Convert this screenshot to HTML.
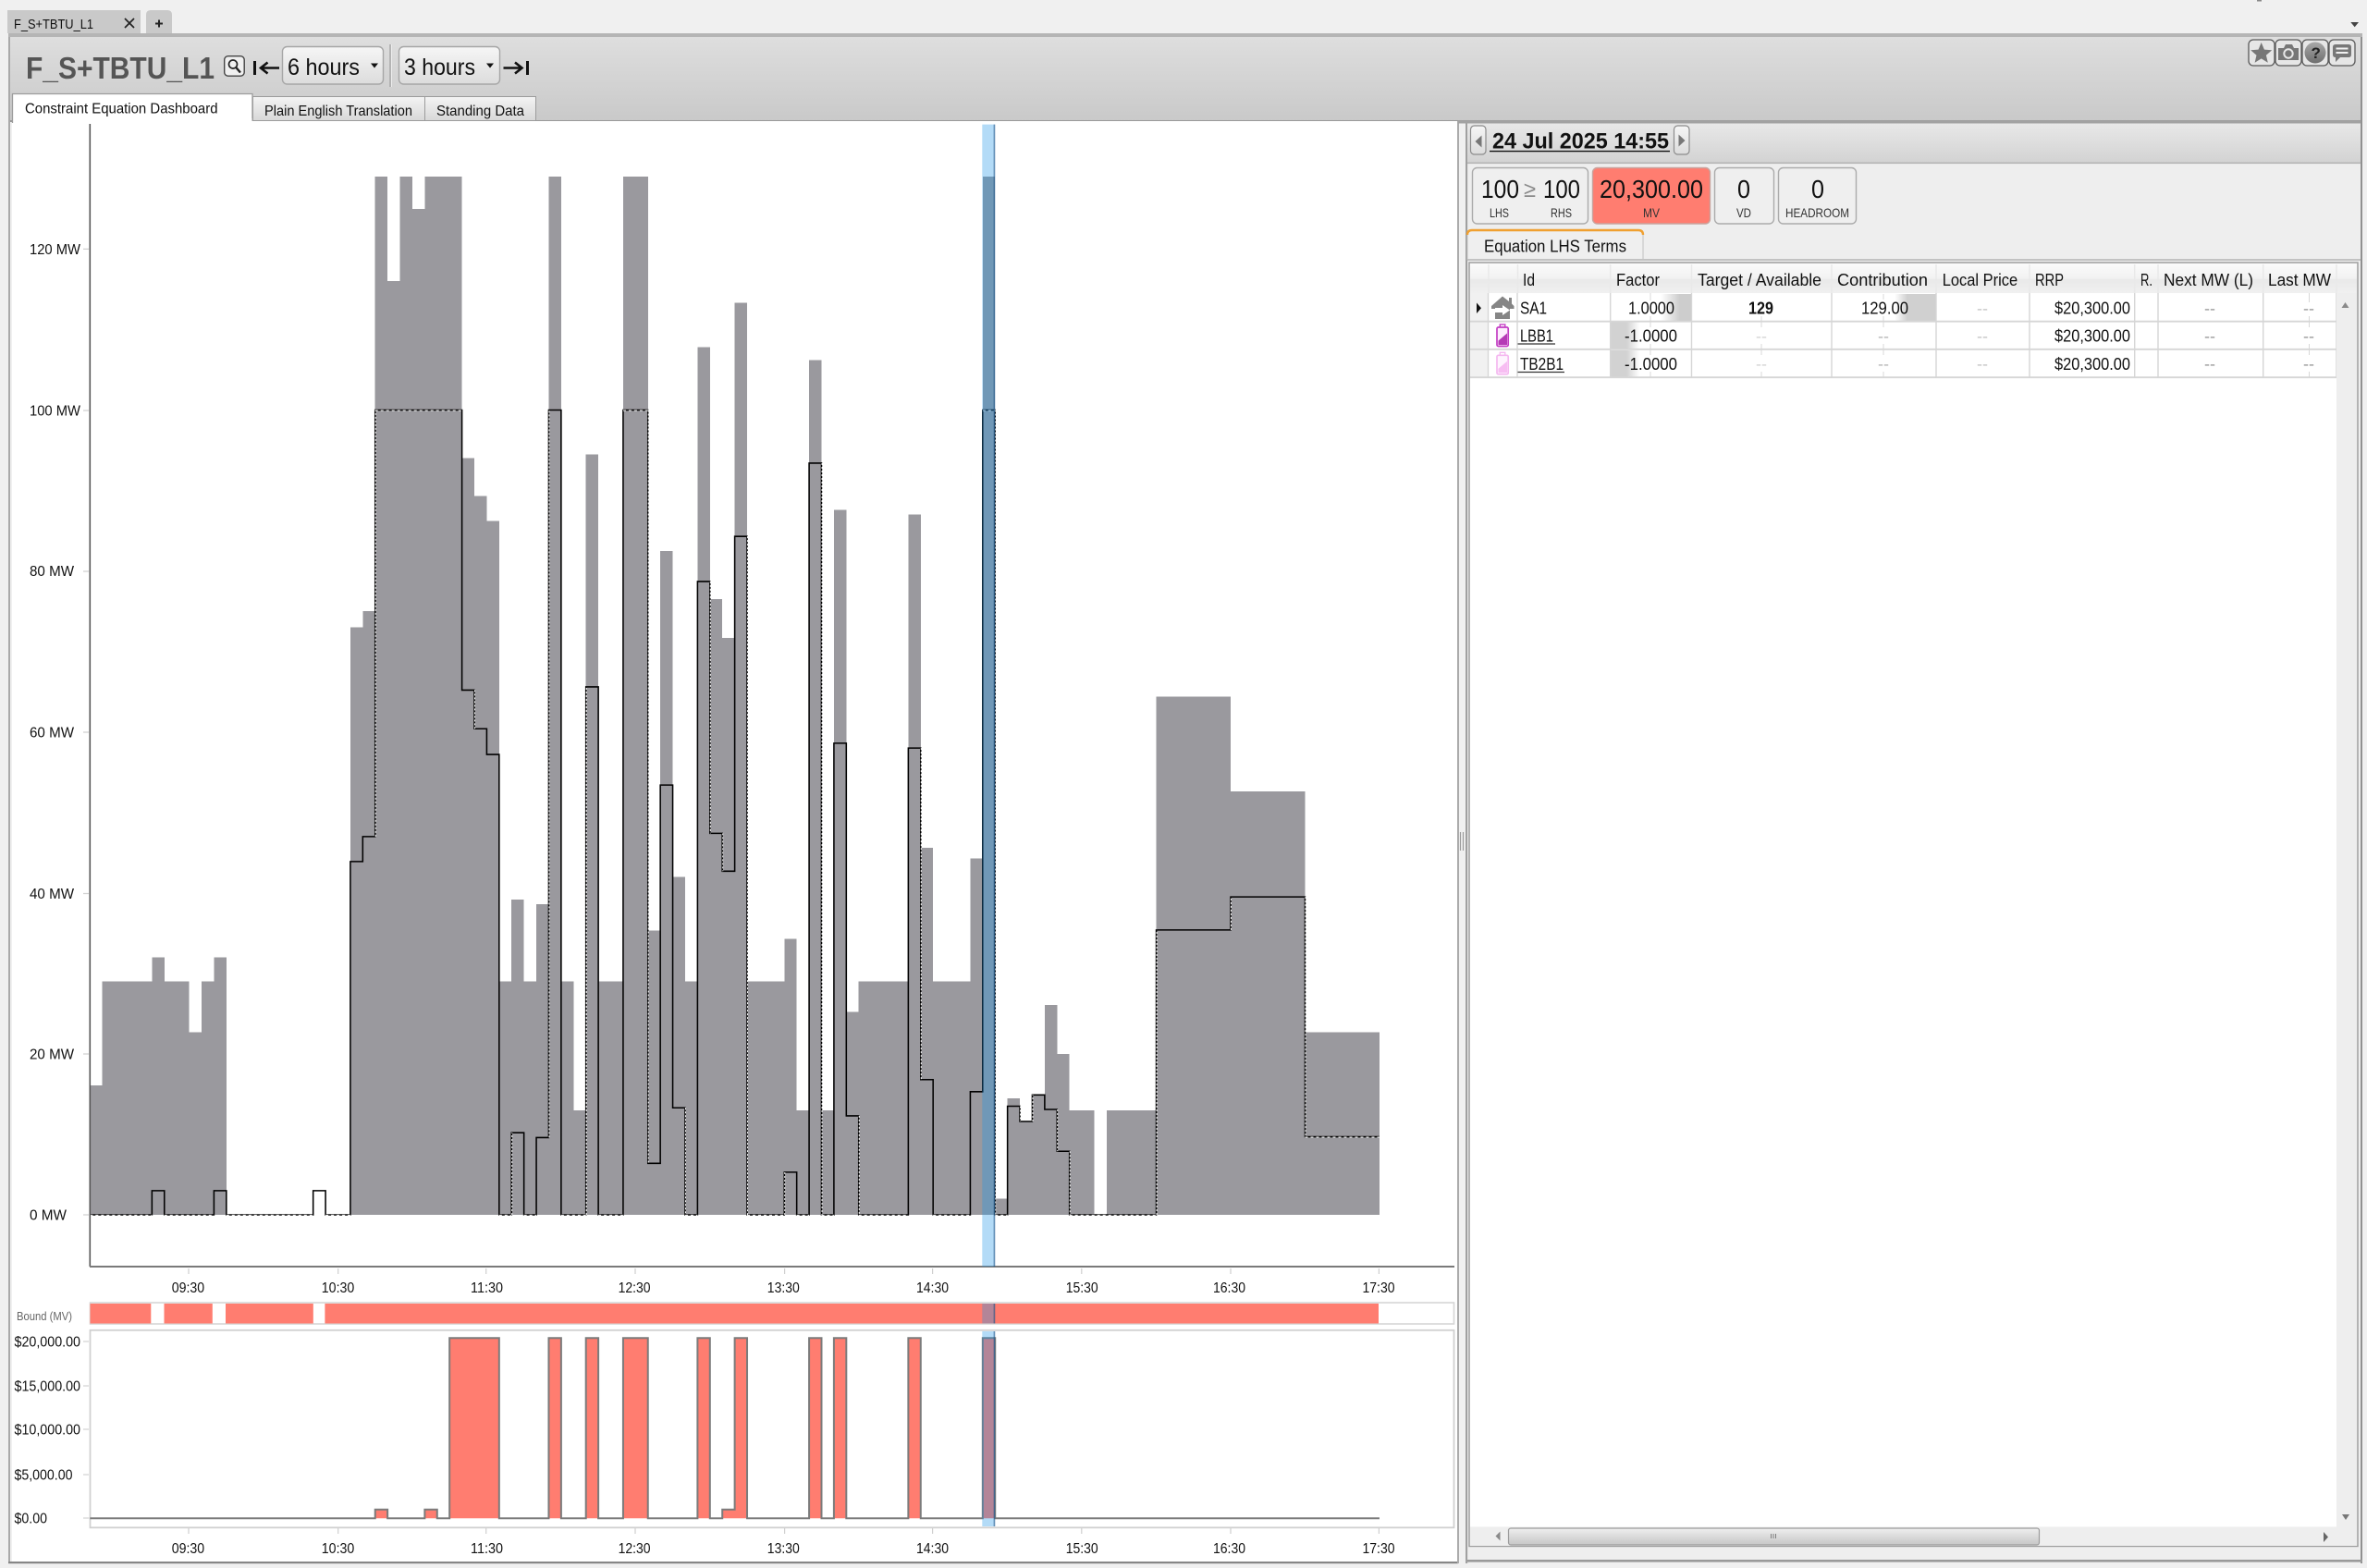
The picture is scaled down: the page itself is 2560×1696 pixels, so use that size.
<!DOCTYPE html>
<html lang="en">
<head>
<meta charset="utf-8">
<title>F_S+TBTU_L1</title>
<style>
html,body{margin:0;padding:0;background:#f0f0f0;width:2560px;height:1696px;overflow:hidden}
svg{display:block}
text{fill:#111}
.ax{font-size:15.5px}
.g{vector-effect:non-scaling-stroke}
</style>
</head>
<body>
<svg xmlns="http://www.w3.org/2000/svg" width="2560" height="1696" viewBox="0 0 2560 1696" font-family="'Liberation Sans', sans-serif">
<defs>
<linearGradient id="hdr" x1="0" y1="0" x2="0" y2="1"><stop offset="0" stop-color="#dedede"/><stop offset="1" stop-color="#c9c9c9"/></linearGradient>
<linearGradient id="date" x1="0" y1="0" x2="0" y2="1"><stop offset="0" stop-color="#e8e8e8"/><stop offset="1" stop-color="#d3d3d3"/></linearGradient>
<linearGradient id="btn" x1="0" y1="0" x2="0" y2="1"><stop offset="0" stop-color="#f6f6f6"/><stop offset="1" stop-color="#dcdcdc"/></linearGradient>
<linearGradient id="tab" x1="0" y1="0" x2="0" y2="1"><stop offset="0" stop-color="#f4f4f4"/><stop offset="1" stop-color="#d8d8d8"/></linearGradient>
<linearGradient id="th" x1="0" y1="0" x2="0" y2="1"><stop offset="0" stop-color="#fbfbfb"/><stop offset=".5" stop-color="#f2f2f2"/><stop offset=".55" stop-color="#e9e9e9"/><stop offset="1" stop-color="#f0f0f0"/></linearGradient>
<linearGradient id="thumb" x1="0" y1="0" x2="0" y2="1"><stop offset="0" stop-color="#efefef"/><stop offset="1" stop-color="#c6c6c6"/></linearGradient>
<linearGradient id="fr" x1="0" y1="0" x2="1" y2="0"><stop offset="0" stop-color="#fff"/><stop offset=".62" stop-color="#fff"/><stop offset=".85" stop-color="#cdcdcd"/><stop offset="1" stop-color="#cdcdcd"/></linearGradient>
<linearGradient id="fl" x1="0" y1="0" x2="1" y2="0"><stop offset="0" stop-color="#d2d2d2"/><stop offset=".2" stop-color="#d2d2d2"/><stop offset=".36" stop-color="#fff"/><stop offset="1" stop-color="#fff"/></linearGradient>
<linearGradient id="cr" x1="0" y1="0" x2="1" y2="0"><stop offset="0" stop-color="#fff"/><stop offset=".6" stop-color="#fff"/><stop offset=".72" stop-color="#d0d0d0"/><stop offset="1" stop-color="#d0d0d0"/></linearGradient>
<linearGradient id="q" x1="0" y1="0" x2="0" y2="1"><stop offset="0" stop-color="#a8a8a8"/><stop offset="1" stop-color="#6e6e6e"/></linearGradient>
</defs>

<!-- page background -->
<rect width="2560" height="1696" fill="#f0f0f0"/>
<path d="M2542.3 24h8.7l-4.3 5.3z" fill="#444"/>
<rect x="2441" y="0" width="5" height="1.5" fill="#888"/>

<!-- window tabs -->
<rect x="8" y="11" width="144" height="25" fill="#c9c9c9"/>
<text x="15" y="31" font-size="15" textLength="86" lengthAdjust="spacingAndGlyphs">F_S+TBTU_L1</text>
<path d="M135 20L145 30M145 20L135 30" stroke="#222" stroke-width="1.7" fill="none"/>
<path d="M158 36V16q0-5 5-5h18q5 0 5 5v20z" fill="#c9c9c9"/>
<path d="M168 25.5h8M172 21.5v8" stroke="#222" stroke-width="2" fill="none"/>

<!-- main window frame -->
<rect x="9" y="36" width="2546" height="4" fill="#b5b5b5"/>
<rect x="9" y="40" width="2545" height="91" fill="url(#hdr)"/>
<rect x="9" y="130" width="2545" height="2" fill="#999"/>
<rect x="9" y="40" width="2" height="1651" fill="#a9a9a9"/>
<rect x="2553" y="40" width="2" height="1651" fill="#909090"/>

<!-- title row -->
<text x="28" y="85" font-size="33" font-weight="bold" textLength="204" lengthAdjust="spacingAndGlyphs" style="fill:#555">F_S+TBTU_L1</text>
<rect x="242.7" y="60.7" width="21.5" height="21.5" rx="4" fill="#f0f0f0" stroke="#444" stroke-width="1.4"/>
<circle cx="252" cy="69.5" r="4.5" fill="none" stroke="#222" stroke-width="1.7"/>
<path d="M255.3 73L260 78.5" stroke="#222" stroke-width="2.4"/>
<path d="M275.5 66V81" stroke="#111" stroke-width="3"/>
<path d="M302 73.5H284M289.5 67.5L282 73.5L289.5 79.5" stroke="#111" stroke-width="2.6" fill="none"/>
<rect x="305.5" y="50.5" width="109" height="40.5" rx="5" fill="url(#btn)" stroke="#a6a6a6" stroke-width="1.4"/>
<text x="311" y="81" font-size="25" textLength="78" lengthAdjust="spacingAndGlyphs">6 hours</text>
<path d="M401 68.5h8l-4 5z" fill="#111"/>
<path d="M422 48V94" stroke="#a8a8a8" stroke-width="1.5"/>
<path d="M423.5 48V94" stroke="#ececec" stroke-width="1"/>
<rect x="431.5" y="50.5" width="109" height="40.5" rx="5" fill="url(#btn)" stroke="#a6a6a6" stroke-width="1.4"/>
<text x="437" y="81" font-size="25" textLength="77" lengthAdjust="spacingAndGlyphs">3 hours</text>
<path d="M526 68.5h8l-4 5z" fill="#111"/>
<path d="M544.5 73.5H563M557 67.5L564.5 73.5L557 79.5" stroke="#111" stroke-width="2.6" fill="none"/>
<path d="M570.5 66V81" stroke="#111" stroke-width="3"/>

<!-- top right buttons -->
<rect x="2432" y="43" width="28" height="28" rx="5" fill="#e6e6e6" stroke="#5a5a5a" stroke-width="1.3"/>
<rect x="2461" y="43" width="28" height="28" rx="5" fill="#e6e6e6" stroke="#5a5a5a" stroke-width="1.3"/>
<rect x="2490" y="43" width="28" height="28" rx="5" fill="#e6e6e6" stroke="#5a5a5a" stroke-width="1.3"/>
<rect x="2519" y="43" width="28" height="28" rx="5" fill="#e6e6e6" stroke="#5a5a5a" stroke-width="1.3"/>
<path d="M2445.7 46l3.2 7.6 8.3.7-6.3 5.4 1.9 8-7.1-4.3-7.1 4.3 1.9-8-6.3-5.4 8.3-.7z" fill="#777"/>
<path d="M2464 52h6l2-4h7l2 4h5v13h-22z" fill="#777"/>
<circle cx="2475" cy="58" r="4.7" fill="#777" stroke="#e8e8e8" stroke-width="2"/>
<circle cx="2504" cy="57" r="11.5" fill="url(#q)"/>
<text x="2499.5" y="63" font-size="17" font-weight="bold" style="fill:#222">?</text>
<path d="M2526 48h14q3 0 3 3v8q0 3-3 3h-9l-5 5v-5q-3 0-3-3v-8q0-3 3-3z" fill="#777"/>
<path d="M2526.5 52.5h13M2526.5 57h13" stroke="#f0f0f0" stroke-width="2"/>

<!-- chart area tabs -->
<rect x="13" y="131" width="1564" height="1558" fill="#fff"/>
<rect x="273.5" y="104.5" width="186" height="26" fill="url(#tab)" stroke="#9c9c9c" stroke-width="1"/>
<rect x="459.5" y="104.5" width="120" height="26" fill="url(#tab)" stroke="#9c9c9c" stroke-width="1"/>
<path d="M13.5 133V101.5H273V131" fill="#fff" stroke="#9c9c9c" stroke-width="1.3"/>
<rect x="14.5" y="128" width="258" height="6" fill="#fff"/>
<text x="27" y="122.5" font-size="16" textLength="208.5" lengthAdjust="spacingAndGlyphs">Constraint Equation Dashboard</text>
<text x="286" y="125" font-size="16" textLength="160" lengthAdjust="spacingAndGlyphs">Plain English Translation</text>
<text x="472" y="125" font-size="16" textLength="95" lengthAdjust="spacingAndGlyphs">Standing Data</text>

<!-- MAIN CHART -->
<g shape-rendering="crispEdges">
<path transform="translate(97.3,1314) scale(13.41,-8.705)" fill="#9a999e" d="M0 0V16.1H1V29H5V32H6V29H8V22.7H9V29H10V32H11V0H21V73H22V75H23V129H24V116H25V129H26V125H27V129H30V94H31V89.3H32V86.2H33V29H34V39.2H35V29H36V38.6H37V129H38V29H39V13H40V94.5H41V29H43V129H45V35.3H46V82.5H47V42H48V29H49V107.8H50V76.5H51V71.7H52V113.3H53V29H56V34.3H57V13H58V106.2H59V13H60V87.6H61V25.2H62V29H66V87H67V45.6H68V29H71V44.3H72V129H73V2H74V14.5H75V11.6H76V14.9H77V26.1H78V20H79V13H81V0H82V13H86V64.4H92V52.6H98V22.7H104V0Z"/>
</g>
<path class="g" transform="translate(97.3,1314) scale(13.41,-8.705)" fill="none" stroke="#000" stroke-width="1.55" d="M0 0H5V3H6V0H10V3H11V0H18V3H19V0H21V43.9H22V47H23V100H30V65.2H31V60.4H32V57.2H33V0H34V10.2H35V0H36V9.6H37V100H38V0H40V65.6H41V0H43V100H45V6.4H46V53.4H47V13.3H48V0H49V78.7H50V47.4H51V42.7H52V84.3H53V0H56V5.3H57V0H58V93.4H59V0H60V58.6H61V12.3H62V0H66V58H67V16.8H68V0H71V15.3H72V100H73V0H74V13.5H75V11.6H76V14.9H77V13.1H78V7.9H79V0H86V35.4H92V39.5H98V9.7H104"/>
<path class="g" transform="translate(97.8,1314) scale(13.41,-8.705)" fill="none" stroke="#fff" stroke-width="1" stroke-dasharray="2 2" d="M23 47V100M31 65.2V60.4M34 0V10.2M37 9.6V100M40 0V65.6M45 100V6.4M48 13.3V0M50 78.7V47.4M51 47.4V42.7M53 84.3V0M56 0V5.3M59 93.4V0M62 12.3V0M67 58V16.8M73 100V0M75 13.5V11.6M76 11.6V14.9M78 13.1V7.9M79 7.9V0M86 0V35.4M92 35.4V39.5M98 39.5V9.7"/>
<path class="g" transform="translate(97.3,1314.4) scale(13.41,-8.705)" fill="none" stroke="#fff" stroke-width="1" stroke-dasharray="3 3" d="M0 0H5M6 0H10M11 0H18M19 0H21M33 0H34M35 0H36M38 0H40M41 0H43M48 0H49M53 0H56M57 0H58M59 0H60M62 0H66M68 0H71M73 0H74M79 0H86"/>
<path class="g" transform="translate(97.3,1314.5) scale(13.41,-8.705)" fill="none" stroke="#fff" stroke-width="1" stroke-dasharray="3 3" d="M23 100H30M43 100H45M72 100H73M98 9.7H104"/>

<!-- main axes -->
<path d="M97.3 134V1370" stroke="#555" stroke-width="1.6"/>
<path d="M97 1370H1573" stroke="#7a7a7a" stroke-width="2"/>
<path d="M90 269.4h6M90 444h6M90 618h6M90 792h6M90 966.5h6M90 1140h6M90 1314h6" stroke="#d0d0d0" stroke-width="1.2"/>
<text class="ax" x="32" y="274.9" textLength="55" lengthAdjust="spacingAndGlyphs">120 MW</text>
<text class="ax" x="32" y="449.5" textLength="55" lengthAdjust="spacingAndGlyphs">100 MW</text>
<text class="ax" x="32" y="623" textLength="48" lengthAdjust="spacingAndGlyphs">80 MW</text>
<text class="ax" x="32" y="797.5" textLength="48" lengthAdjust="spacingAndGlyphs">60 MW</text>
<text class="ax" x="32" y="972" textLength="48" lengthAdjust="spacingAndGlyphs">40 MW</text>
<text class="ax" x="32" y="1145.5" textLength="48" lengthAdjust="spacingAndGlyphs">20 MW</text>
<text class="ax" x="32" y="1319.5" textLength="40" lengthAdjust="spacingAndGlyphs">0 MW</text>

<!-- ticks and labels upper -->
<path d="M204 1372v6M365.7 1372v6M525.7 1372v6M687 1372v6M848.6 1372v6M1008.6 1372v6M1169.8 1372v6M1331 1372v6M1491.4 1372v6" stroke="#cfcfcf" stroke-width="1.2"/>
<g class="ax" font-size="15.5">
<text x="185.7" y="1398" textLength="35.5" lengthAdjust="spacingAndGlyphs">09:30</text>
<text x="347.8" y="1398" textLength="35.5" lengthAdjust="spacingAndGlyphs">10:30</text>
<text x="509" y="1398" textLength="35" lengthAdjust="spacingAndGlyphs">11:30</text>
<text x="668.6" y="1398" textLength="35" lengthAdjust="spacingAndGlyphs">12:30</text>
<text x="829.8" y="1398" textLength="35" lengthAdjust="spacingAndGlyphs">13:30</text>
<text x="991" y="1398" textLength="35" lengthAdjust="spacingAndGlyphs">14:30</text>
<text x="1152.7" y="1398" textLength="35" lengthAdjust="spacingAndGlyphs">15:30</text>
<text x="1312" y="1398" textLength="35" lengthAdjust="spacingAndGlyphs">16:30</text>
<text x="1473.5" y="1398" textLength="35" lengthAdjust="spacingAndGlyphs">17:30</text>
</g>

<!-- bound strip -->
<rect x="97.5" y="1409" width="1475" height="23" fill="#fff" stroke="#d6d6d6" stroke-width="1.6"/>
<path d="M97.5 1410H163.3V1431.5H97.5ZM177.5 1410H229.8V1431.5H177.5ZM244 1410H338.8V1431.5H244ZM351.4 1410H1491V1431.5H351.4Z" fill="#ff7d70"/>
<text x="18" y="1428" font-size="12.5" textLength="60" lengthAdjust="spacingAndGlyphs" style="fill:#666">Bound (MV)</text>

<!-- price chart -->
<rect x="97.5" y="1438.8" width="1475" height="213.5" fill="#fff" stroke="#d0d0d0" stroke-width="1.8"/>
<path class="g" transform="translate(97.3,1642.3) scale(13.41,-0.009606)" fill="#ff7d70" stroke="#7b7b7b" stroke-width="2" d="M0 0H23V1000H24V0H27V1000H28V0H29V20300H33V0H37V20300H38V0H40V20300H41V0H43V20300H45V0H49V20300H50V0H51V1000H52V20300H53V0H58V20300H59V0H60V20300H61V0H66V20300H67V0H72V20300H73V0H104"/>
<path d="M90 1451h6M90 1499h6M90 1546h6M90 1595h6M90 1642h6" stroke="#d4d4d4" stroke-width="1.2"/>
<g font-size="15.5">
<text x="15.5" y="1456.5" textLength="71.5" lengthAdjust="spacingAndGlyphs">$20,000.00</text>
<text x="15.5" y="1504.5" textLength="71.5" lengthAdjust="spacingAndGlyphs">$15,000.00</text>
<text x="15.5" y="1551.5" textLength="71.5" lengthAdjust="spacingAndGlyphs">$10,000.00</text>
<text x="15.5" y="1600.5" textLength="63" lengthAdjust="spacingAndGlyphs">$5,000.00</text>
<text x="15.5" y="1647.5" textLength="35.5" lengthAdjust="spacingAndGlyphs">$0.00</text>
</g>
<path d="M204 1653v6M365.7 1653v6M525.7 1653v6M687 1653v6M848.6 1653v6M1008.6 1653v6M1169.8 1653v6M1331 1653v6M1491.4 1653v6" stroke="#cfcfcf" stroke-width="1.2"/>
<g font-size="15.5">
<text x="185.7" y="1680" textLength="35.5" lengthAdjust="spacingAndGlyphs">09:30</text>
<text x="347.8" y="1680" textLength="35.5" lengthAdjust="spacingAndGlyphs">10:30</text>
<text x="509" y="1680" textLength="35" lengthAdjust="spacingAndGlyphs">11:30</text>
<text x="668.6" y="1680" textLength="35" lengthAdjust="spacingAndGlyphs">12:30</text>
<text x="829.8" y="1680" textLength="35" lengthAdjust="spacingAndGlyphs">13:30</text>
<text x="991" y="1680" textLength="35" lengthAdjust="spacingAndGlyphs">14:30</text>
<text x="1152.7" y="1680" textLength="35" lengthAdjust="spacingAndGlyphs">15:30</text>
<text x="1312" y="1680" textLength="35" lengthAdjust="spacingAndGlyphs">16:30</text>
<text x="1473.5" y="1680" textLength="35" lengthAdjust="spacingAndGlyphs">17:30</text>
</g>

<!-- highlighted interval -->
<g fill="rgb(32,149,232)" fill-opacity=".34">
<rect x="1062.3" y="134.6" width="13.8" height="1235.4"/>
<rect x="1062.3" y="1410" width="13.8" height="21.5"/>
<rect x="1062.3" y="1440" width="13.8" height="211"/>
</g>
<g fill="rgb(20,70,120)" fill-opacity=".5">
<rect x="1074.6" y="134.6" width="1.7" height="1235.4"/>
<rect x="1074.6" y="1410" width="1.7" height="21.5"/>
<rect x="1074.6" y="1440" width="1.7" height="211"/>
</g>

<!-- left panel bottom -->
<rect x="9" y="1689" width="1568" height="2.2" fill="#868686"/>

<!-- splitter -->
<rect x="1577" y="131" width="9" height="1560" fill="#f0f0f0"/>
<rect x="1576" y="131" width="2" height="1560" fill="#ababab"/>
<rect x="1585" y="131" width="2" height="1560" fill="#a0a0a0"/>
<rect x="1587" y="131" width="1.4" height="1560" fill="#e4e4e4"/>
<path d="M1579.5 900v20M1582.5 900v20" stroke="#9a9a9a" stroke-width="1.2"/>

<!-- right panel -->
<rect x="1588" y="131" width="965" height="1558" fill="#eeeeee"/>
<rect x="1587" y="133.5" width="966" height="42" fill="url(#date)"/>
<rect x="1577" y="130.5" width="976" height="3" fill="#a2a2a2"/>
<rect x="1587" y="175.5" width="966" height="1.6" fill="#b4b4b4"/>
<rect x="1587" y="1687" width="968" height="2.6" fill="#9a9a9a"/>

<!-- date nav -->
<rect x="1590.5" y="136" width="16.5" height="31" rx="4" fill="url(#btn)" stroke="#8c8c8c" stroke-width="1.2"/>
<path d="M1602.5 146.5v13l-7-6.5z" fill="#777"/>
<rect x="1810.5" y="136" width="16.5" height="31" rx="4" fill="url(#btn)" stroke="#8c8c8c" stroke-width="1.2"/>
<path d="M1815.5 145.5v13l7-6.5z" fill="#777"/>
<text x="1614" y="160.7" font-size="24" font-weight="bold" textLength="191" lengthAdjust="spacingAndGlyphs">24 Jul 2025 14:55</text>
<path d="M1611 163.6H1806" stroke="#111" stroke-width="1.4"/>

<!-- stat boxes -->
<rect x="1592.5" y="181.5" width="125" height="60.5" rx="5" fill="#efefef" stroke="#ababab" stroke-width="1.4"/>
<text x="1602" y="214" font-size="28" textLength="41" lengthAdjust="spacingAndGlyphs">100</text>
<text x="1648" y="213" font-size="24" textLength="13" lengthAdjust="spacingAndGlyphs" style="fill:#8a8a8a">≥</text>
<text x="1669" y="214" font-size="28" textLength="40" lengthAdjust="spacingAndGlyphs">100</text>
<text x="1611" y="235" font-size="14" textLength="21" lengthAdjust="spacingAndGlyphs" style="fill:#333">LHS</text>
<text x="1677" y="235" font-size="14" textLength="23" lengthAdjust="spacingAndGlyphs" style="fill:#333">RHS</text>
<rect x="1722.5" y="181.5" width="127" height="60.5" rx="5" fill="#ff7d70" stroke="#c9a49e" stroke-width="1.4"/>
<text x="1730" y="214" font-size="28" textLength="112" lengthAdjust="spacingAndGlyphs">20,300.00</text>
<text x="1777" y="235" font-size="14" textLength="18" lengthAdjust="spacingAndGlyphs" style="fill:#333">MV</text>
<rect x="1854.5" y="181.5" width="64" height="60.5" rx="5" fill="#efefef" stroke="#ababab" stroke-width="1.4"/>
<text x="1879" y="214" font-size="28" textLength="14" lengthAdjust="spacingAndGlyphs">0</text>
<text x="1878" y="235" font-size="14" textLength="16" lengthAdjust="spacingAndGlyphs" style="fill:#333">VD</text>
<rect x="1923.5" y="181.5" width="84" height="60.5" rx="5" fill="#efefef" stroke="#ababab" stroke-width="1.4"/>
<text x="1959" y="214" font-size="28" textLength="14" lengthAdjust="spacingAndGlyphs">0</text>
<text x="1931" y="235" font-size="14" textLength="69" lengthAdjust="spacingAndGlyphs" style="fill:#333">HEADROOM</text>

<!-- sub tab -->
<path d="M1587 281V254q0-5 5-5H1772q5 0 5 5V281z" fill="#efefef" stroke="#c0c0c0" stroke-width="1"/>
<path d="M1587 254q0-5 5-5H1772q5 0 5 5" fill="none" stroke="#f0a030" stroke-width="2.4"/>
<text x="1605" y="272.5" font-size="18" textLength="154" lengthAdjust="spacingAndGlyphs">Equation LHS Terms</text>
<rect x="1777" y="280" width="776" height="2" fill="#c2c2c2"/>
<rect x="1587" y="280" width="190" height="2" fill="#c2c2c2"/>

<!-- table -->
<rect x="1589" y="284" width="961" height="1388.5" fill="#eeeeee" stroke="#9c9c9c" stroke-width="1.4"/>
<rect x="1590" y="317" width="937" height="1334.5" fill="#fff"/>
<rect x="1590" y="285" width="959" height="32" fill="url(#th)"/>
<rect x="1590" y="317" width="19.5" height="91.5" fill="#f1f1f1"/>
<path d="M1610 286V317M1641.5 286V317M1741.7 286V317M1829.5 286V317M1981 286V317M2094 286V317M2195 286V317M2308.7 286V317M2334 286V317M2447.7 286V317M2527 286V317" stroke="#e9e9e9" stroke-width="1.5"/>
<g font-size="18">
<text x="1647" y="309" textLength="13" lengthAdjust="spacingAndGlyphs">Id</text>
<text x="1748" y="309" textLength="47" lengthAdjust="spacingAndGlyphs">Factor</text>
<text x="1836" y="309" textLength="134" lengthAdjust="spacingAndGlyphs">Target / Available</text>
<text x="1987" y="309" textLength="98" lengthAdjust="spacingAndGlyphs">Contribution</text>
<text x="2100.7" y="309" textLength="81.5" lengthAdjust="spacingAndGlyphs">Local Price</text>
<text x="2201" y="309" textLength="31" lengthAdjust="spacingAndGlyphs">RRP</text>
<text x="2315" y="309" textLength="13" lengthAdjust="spacingAndGlyphs">R.</text>
<text x="2340" y="309" textLength="97" lengthAdjust="spacingAndGlyphs">Next MW (L)</text>
<text x="2453" y="309" textLength="68" lengthAdjust="spacingAndGlyphs">Last MW</text>
</g>

<!-- cell backgrounds -->
<rect x="1741.7" y="318" width="88" height="29" fill="url(#fr)"/>
<rect x="1741.7" y="348.5" width="88" height="29" fill="url(#fl)"/>
<rect x="1741.7" y="379" width="88" height="29" fill="url(#fl)"/>
<rect x="1981.5" y="318" width="113" height="29" fill="url(#cr)"/>

<!-- faint centre marks -->
<path d="M1785 317v8M1785 342v12M1785 372v12M1785 402v6M1905 342v12M1905 372v12M1905 402v6M2037 318v6M2037 342v12M2037 372v12M2037 402v6M2497.5 317v10M2497.5 342v12M2497.5 372v12M2497.5 402v6" stroke="#d8d8d8" stroke-width="1"/>

<!-- grid -->
<path d="M1590 347.7H2527M1590 377.8H2527M1590 408.2H2527" stroke="#d6d6d6" stroke-width="1.8"/>
<path d="M1609.5 317V408M1641 317V408M1741.7 317V408M1829.5 317V408M1981 317V408M2094 317V408M2195 317V408M2308.7 317V408M2334 317V408M2447.7 317V408M2527 317V408" stroke="#d6d6d6" stroke-width="1.4"/>

<!-- row 1 -->
<path d="M1597 327.5v11.5l5-5.7z" fill="#111"/>
<path d="M1625 320.5L1632 326V322H1635V328.5L1637.5 331V334H1633V345H1617V338H1625V341L1633 335.5L1625 330V333H1617V334H1613V331Z" fill="#858585"/>
<text x="1644" y="339.5" font-size="18" textLength="29" lengthAdjust="spacingAndGlyphs">SA1</text>
<text x="1761" y="339.5" font-size="18" textLength="50" lengthAdjust="spacingAndGlyphs">1.0000</text>
<text x="1891" y="339.5" font-size="18" textLength="27" lengthAdjust="spacingAndGlyphs" font-weight="bold">129</text>
<text x="2013" y="339.5" font-size="18" textLength="51" lengthAdjust="spacingAndGlyphs">129.00</text>
<text x="2222" y="339.5" font-size="18" textLength="82" lengthAdjust="spacingAndGlyphs">$20,300.00</text>

<!-- row 2 -->
<rect x="1622.3" y="351" width="5.5" height="3" fill="none" stroke="#c43ec4" stroke-width="1.4"/>
<rect x="1619" y="354" width="12.2" height="20.5" rx="1.5" fill="#fdeefd" stroke="#c43ec4" stroke-width="1.7"/>
<path d="M1620.5 373V368.5L1630 360.5V373Z" fill="#b53ab5"/>
<text x="1644" y="369.5" font-size="18" textLength="36" lengthAdjust="spacingAndGlyphs">LBB1</text>
<path d="M1641.5 372H1682" stroke="#333" stroke-width="1.3"/>
<text x="1757" y="369.5" font-size="18" textLength="57" lengthAdjust="spacingAndGlyphs">-1.0000</text>
<text x="2222" y="369.5" font-size="18" textLength="82" lengthAdjust="spacingAndGlyphs">$20,300.00</text>

<!-- row 3 -->
<rect x="1622.3" y="381.3" width="5.5" height="3" fill="none" stroke="#f5b8f0" stroke-width="1.4"/>
<rect x="1619" y="384.3" width="12.2" height="20.5" rx="1.5" fill="#fef4fe" stroke="#f5b8f0" stroke-width="1.7"/>
<path d="M1620.5 403.3V398.8L1630 390.8V403.3Z" fill="#f7bdf2"/>
<text x="1644" y="400" font-size="18" textLength="47" lengthAdjust="spacingAndGlyphs">TB2B1</text>
<path d="M1641.5 402.5H1692" stroke="#333" stroke-width="1.3"/>
<text x="1757" y="400" font-size="18" textLength="57" lengthAdjust="spacingAndGlyphs">-1.0000</text>
<text x="2222" y="400" font-size="18" textLength="82" lengthAdjust="spacingAndGlyphs">$20,300.00</text>

<!-- dashes -->
<g font-size="15">
<text x="1899" y="369" textLength="12" lengthAdjust="spacingAndGlyphs" style="fill:#ccc">--</text>
<text x="1899" y="399" textLength="12" lengthAdjust="spacingAndGlyphs" style="fill:#ccc">--</text>
<text x="2031" y="369" textLength="12" lengthAdjust="spacingAndGlyphs" style="fill:#aaa">--</text>
<text x="2031" y="399" textLength="12" lengthAdjust="spacingAndGlyphs" style="fill:#aaa">--</text>
<text x="2138" y="339" textLength="12" lengthAdjust="spacingAndGlyphs" style="fill:#bbb">--</text>
<text x="2138" y="369" textLength="12" lengthAdjust="spacingAndGlyphs" style="fill:#bbb">--</text>
<text x="2138" y="399" textLength="12" lengthAdjust="spacingAndGlyphs" style="fill:#bbb">--</text>
<text x="2384" y="339" textLength="12" lengthAdjust="spacingAndGlyphs" style="fill:#888">--</text>
<text x="2384" y="369" textLength="12" lengthAdjust="spacingAndGlyphs" style="fill:#888">--</text>
<text x="2384" y="399" textLength="12" lengthAdjust="spacingAndGlyphs" style="fill:#888">--</text>
<text x="2491" y="339" textLength="12" lengthAdjust="spacingAndGlyphs" style="fill:#888">--</text>
<text x="2491" y="369" textLength="12" lengthAdjust="spacingAndGlyphs" style="fill:#888">--</text>
<text x="2491" y="399" textLength="12" lengthAdjust="spacingAndGlyphs" style="fill:#888">--</text>
</g>

<!-- scrollbars -->
<rect x="2527" y="317" width="22" height="1355" fill="#eeeeee"/>
<rect x="1590" y="1652" width="959" height="20" fill="#eeeeee"/>
<path d="M2532.5 333h8l-4-6z" fill="#8a8a8a"/>
<path d="M2533 1638h8l-4 6z" fill="#777"/>
<path d="M1622.5 1656.5v10l-5-5z" fill="#8a8a8a"/>
<path d="M2513 1657v11l5-5.5z" fill="#666"/>
<rect x="1631.5" y="1653" width="574" height="18" rx="2.5" fill="url(#thumb)" stroke="#9c9c9c" stroke-width="1.2"/>
<path d="M1915.5 1659v5M1918 1659v5M1920.5 1659v5" stroke="#808080" stroke-width="1"/>
</svg>
</body>
</html>
